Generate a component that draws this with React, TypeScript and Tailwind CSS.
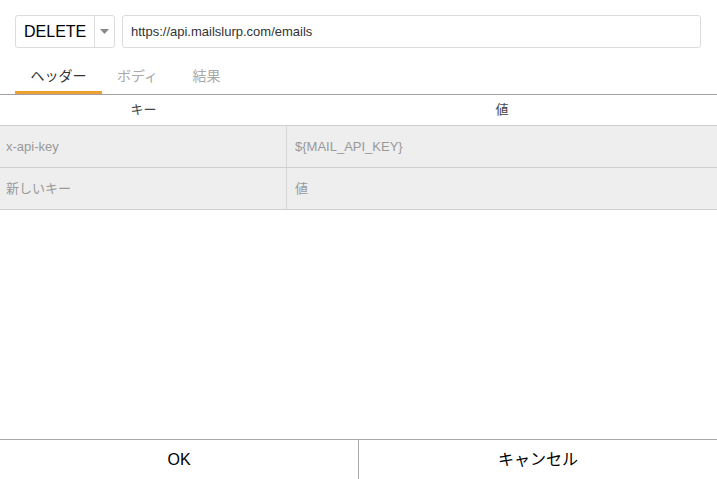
const rows = [
  { key: "x-api-key", value: "${MAIL_API_KEY}" },
  { key: "新しいキー", value: "値" },
];

const font = "font-['Liberation_Sans','Noto_Sans_CJK_JP',sans-serif]";

export default function App() {
  return (
    <div className={`flex h-[479px] w-[717px] flex-col bg-white ${font}`}>
      <div className="flex gap-[7px] pl-[15px] pr-[16px] pt-[15px]">
        <div className="flex h-[33px] w-[100px] items-center rounded-[3px] border border-[#dcdcdc] bg-white">
          <span className="flex-1 pl-[8px] text-[16px] text-black">DELETE</span>
          <div className="flex h-full w-[20px] items-center justify-center border-l border-[#dcdcdc]">
            <svg width="9" height="5" viewBox="0 0 9 5">
              <path d="M0 0h9L4.5 5z" fill="#888" />
            </svg>
          </div>
        </div>
        <div className="flex h-[33px] flex-1 items-center rounded-[3px] border border-[#dcdcdc] px-[8px] text-[13px] text-[#333]">
          https://api.mailslurp.com/emails
        </div>
      </div>

      <div className="mt-[13px] flex px-[15px] text-[14px]">
        <div className="flex h-[33px] w-[87px] items-center justify-center border-b-[3px] border-[#f0a030] text-[#333]">
          ヘッダー
        </div>
        <div className="flex h-[30px] w-[71px] items-center justify-center text-[#aaa]">ボディ</div>
        <div className="flex h-[30px] w-[67px] items-center justify-center text-[#aaa]">結果</div>
      </div>

      <div className="border-t border-[#a0a0a0]">
        <div className="grid h-[30px] grid-cols-[287px_1fr] items-center text-[13px] text-[#444]">
          <div className="text-center">キー</div>
          <div className="text-center">値</div>
        </div>
        {rows.map((r, i) => (
          <div
            key={i}
            className="grid h-[42px] grid-cols-[287px_1fr] border-t border-[#cfcfcf] bg-[#eeeeee] text-[13px] text-[#999]"
          >
            <div className="flex items-center border-r border-[#d6d6d6] pl-[6px]">{r.key}</div>
            <div className="flex items-center pl-[8px]">{r.value}</div>
          </div>
        ))}
        <div className="border-t border-[#cfcfcf]" />
      </div>

      <div className="flex-1" />

      <div className="grid h-[40px] grid-cols-[359px_1fr] border-t border-[#a8a8a8] text-[16px] text-black">
        <div className="flex items-center justify-center border-r border-[#a8a8a8]">OK</div>
        <div className="flex items-center justify-center">キャンセル</div>
      </div>
    </div>
  );
}
